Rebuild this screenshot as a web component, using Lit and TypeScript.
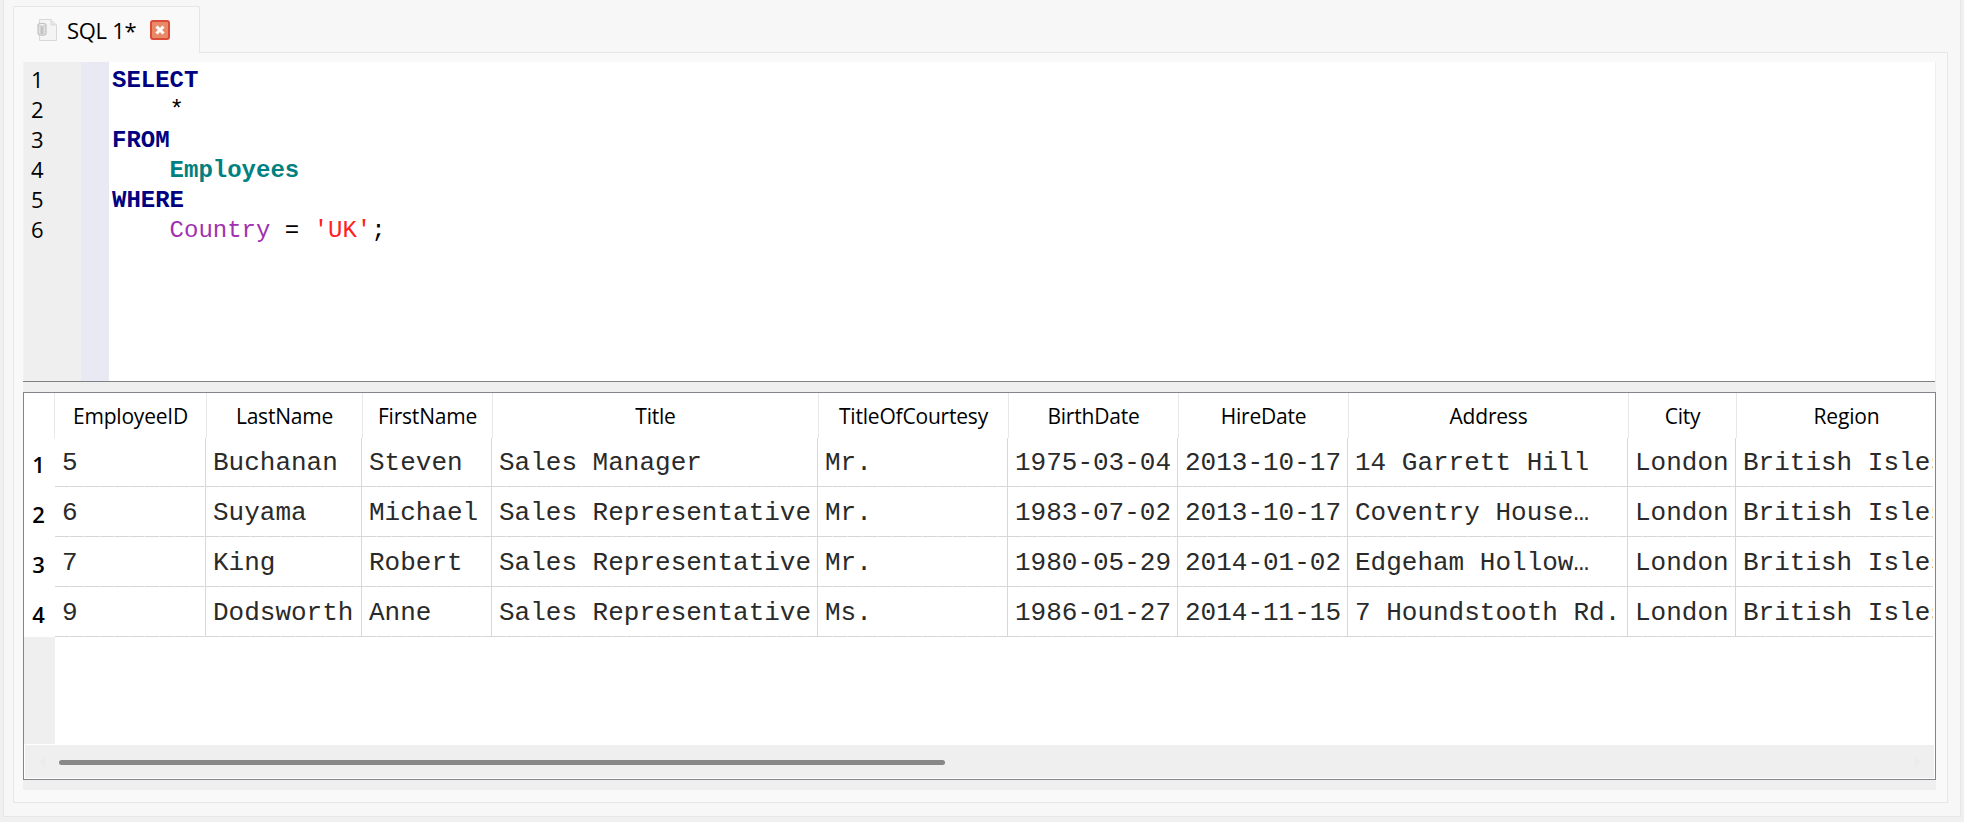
import { LitElement, html, css, svg } from "lit";
import { customElement } from "lit/decorators.js";

const HEAD = ["EmployeeID","LastName","FirstName","Title","TitleOfCourtesy","BirthDate","HireDate","Address","City","Region"];
const ROWS = [
  ["5","Buchanan","Steven","Sales Manager","Mr.","1975-03-04","2013-10-17","14 Garrett Hill","London","British Isles"],
  ["6","Suyama","Michael","Sales Representative","Mr.","1983-07-02","2013-10-17","Coventry House…","London","British Isles"],
  ["7","King","Robert","Sales Representative","Mr.","1980-05-29","2014-01-02","Edgeham Hollow…","London","British Isles"],
  ["9","Dodsworth","Anne","Sales Representative","Ms.","1986-01-27","2014-11-15","7 Houndstooth Rd.","London","British Isles"],
];

@customElement("app-root")
export class AppRoot extends LitElement {
  static styles = css`
    :host { display:flex; flex-direction:column; height:822px; width:1964px; background:#f0f0f0; padding:0 3px 5px; box-sizing:border-box; overflow:hidden; font-family:"Open Sans","Noto Sans",sans-serif; color:#000; }
    .outer { flex:1; display:flex; flex-direction:column; min-height:0; background:#f7f7f7; border:1px solid #e6e6e6; border-top:none; padding:6px 12px 13px 9px; }
    .tab { position:relative; z-index:1; box-sizing:border-box; width:187px; height:47px; margin-bottom:-1px; background:#f9f9f9; border:1px solid #e6e6e6; border-bottom:none; border-radius:2px 2px 0 0; display:flex; align-items:center; padding:0 0 0 23px; }
    .tab svg { display:block; }
    .tab-label { font-size:22px; margin-left:9px; letter-spacing:-0.3px; width:83px; white-space:pre; }
    .pane { flex:1; min-height:0; display:flex; flex-direction:column; background:#f9f9f9; border:1px solid #e6e6e6; padding:9px 11px 12px 9px; }
    .inner { flex:1; min-height:0; display:flex; flex-direction:column; background:#efefef; }
    .editor { height:319px; display:flex; background:#fff; border-left:1px solid #f2f2f2; margin-right:1px; box-sizing:border-box; }
    .gutter { width:57px; box-sizing:border-box; background:#efefef; padding:2px 0 0 7px; font-size:22px; line-height:30px; }
    .fold { width:28px; background:#e9e9f4; }
    .code { padding:4px 0 0 3px; font-family:"Liberation Mono",monospace; font-size:24px; line-height:30px; white-space:pre; }
    .kw { color:#000080; font-weight:700; }
    .tbl { color:#008080; font-weight:700; }
    .col { color:#a030b0; }
    .str { color:#ff2020; }
    .split { height:11px; box-sizing:border-box; border-top:1px solid #808080; margin-right:1px; }
    .table { height:388px; box-sizing:border-box; display:flex; flex-direction:column; background:#fff; border:1px solid #82868a; overflow:hidden; }
    .head, .row { display:grid; flex:none; }
    .head { height:45px; grid-template-columns:30px 152px 156px 130px 326px 190px 170px 170px 280px 108px 220px; }
    .hcell { border-left:1px solid #e8e8e8; font-size:21px; letter-spacing:-0.2px; display:flex; align-items:center; justify-content:center; box-sizing:border-box; white-space:nowrap; }
    .corner { border:none; }
    .rows { flex:1; min-height:0; display:flex; flex-direction:column; margin-right:2px; overflow:hidden; }
    .row { height:50px; grid-template-columns:31px 151px 156px 130px 326px 190px 170px 170px 280px 108px 220px; }
    .row.first { height:49px; }
    .rh { font-size:22px; font-weight:600; display:flex; align-items:center; justify-content:center; padding:3px 2px 0 0; box-sizing:border-box; }
    .cell { box-sizing:border-box; border-right:1px solid #d8d8d8; padding:1px 0 0 7px; display:flex; align-items:center; font-family:"Liberation Mono",monospace; font-size:26px; color:#2a2a2a; white-space:pre; overflow:hidden; background-image:repeating-linear-gradient(90deg,#d6d6d6 0 14px,#ececec 14px 15px); background-size:100% 1px; background-position:bottom; background-repeat:no-repeat; }
    .empty { flex:1; display:flex; }
    .empty i { width:31px; background:#efefef; margin:0 0 1px 0; }
    .track { flex:none; height:33px; margin:0 1px 1px 1px; background:#efefef; display:flex; align-items:center; padding:0 12px 0 0; box-sizing:border-box; position:relative; }
    .arrow { flex:none; display:block; }
    .arrow.left { margin-left:13px; }
    .thumb { position:absolute; left:34px; top:15px; width:886px; height:5px; background:#888; border-radius:3px; }
    .spacer { flex:1; }
  `;

  private fileIcon() {
    return svg`<svg class="ic" width="21" height="24" viewBox="0 0 21 24">
      <path d="M2.5 1.5H14L19.5 7V22.5H2.5Z" fill="#f4f4f4" stroke="#d8d8d8"/>
      <path d="M14 1.5V7H19.5" fill="#e6e6e6" stroke="#d8d8d8"/>
      <path d="M1 6.5C1 5 9 5 9 6.5V16C9 17.6 1 17.6 1 16Z" fill="#e2e2e2" stroke="#b8b8b8"/>
      <ellipse cx="5" cy="6.8" rx="3.6" ry="1.3" fill="#f4f4f4" stroke="#b8b8b8" stroke-width=".7"/>
      <rect x="3.5" y="8.5" width="3" height="7.5" fill="#c4c4c4"/>
    </svg>`;
  }
  private closeIcon() {
    return svg`<svg width="20" height="20" viewBox="0 0 20 20">
      <rect x="1" y="1" width="18" height="18" rx="2" fill="#e88a68" stroke="#dc4a38" stroke-width="2"/>
      <path d="M6.5 6.5L13.5 13.5M13.5 6.5L6.5 13.5" stroke="#fff" stroke-width="3"/>
    </svg>`;
  }

  render() {
    return html`<div class="outer">
      <div class="tab">${this.fileIcon()}<span class="tab-label">SQL 1*</span>${this.closeIcon()}</div>
      <div class="pane"><div class="inner">
        <div class="editor">
          <div class="gutter">${[1,2,3,4,5,6].map(n=>html`<div>${n}</div>`)}</div>
          <div class="fold"></div>
<div class="code"><div class="kw">SELECT</div><div>    *</div><div class="kw">FROM</div><div>    <span class="tbl">Employees</span></div><div class="kw">WHERE</div><div>    <span class="col">Country</span> = <span class="str">'UK'</span>;</div></div>
        </div>
        <div class="split"></div>
        <div class="table">
          <div class="head"><div class="hcell corner"></div>${HEAD.map(h=>html`<div class="hcell">${h}</div>`)}</div>
          <div class="rows">
            ${ROWS.map((r,i)=>html`<div class="row ${i===0?"first":""}"><div class="rh">${i+1}</div>${r.map(c=>html`<div class="cell">${c}</div>`)}</div>`)}
            <div class="empty"><i></i></div>
          </div>
          <div class="track">
            <svg class="arrow left" width="8" height="12" viewBox="0 0 8 12"><path d="M7 1L1 6L7 11Z" fill="#ebebeb"/></svg>
            <div class="spacer"></div>
            <div class="thumb"></div>
            <svg class="arrow" width="8" height="12" viewBox="0 0 8 12"><path d="M1 1L7 6L1 11Z" fill="#ebebeb"/></svg>
          </div>
        </div>
      </div></div>
    </div>`;
  }
}
